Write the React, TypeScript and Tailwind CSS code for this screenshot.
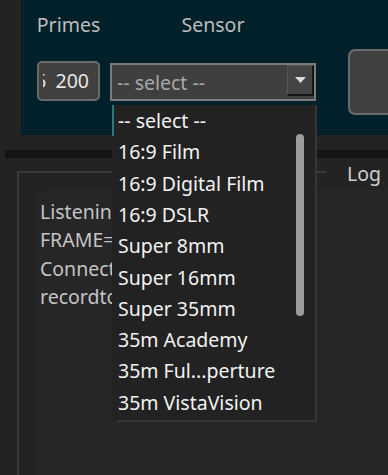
export default function App() {
  const items = [
    "-- select --",
    "16:9 Film",
    "16:9 Digital Film",
    "16:9 DSLR",
    "Super 8mm",
    "Super 16mm",
    "Super 35mm",
    "35m Academy",
    "35m Ful...perture",
    "35m VistaVision",
  ];
  const logLines = ["Listenin", "FRAME=", "Connect", "recordto"];
  return (
    <div
      className="relative w-[388px] h-[475px] overflow-hidden bg-[#232323] text-[19.5px]"
      style={{ fontFamily: '"Noto Sans", "Open Sans", sans-serif' }}
    >
      {/* top panel */}
      <div className="ml-[21px] h-[135px] bg-[#01202a] flex items-start pl-[16px] overflow-hidden">
        <div className="flex flex-col items-center w-[63px] flex-none pt-[12px]">
          <span className="leading-[26px] text-[#bdbdbd]">Primes</span>
          <div className="mt-[23px] h-[40px] w-[63px] rounded-[5px] border-2 border-[#6a6a6a] bg-[#404040] flex items-center pl-[4px] pr-[9px]">
            <div className="flex-1 h-full overflow-hidden flex items-center justify-end">
              <span className="whitespace-nowrap text-[#e6e6e6] leading-none [word-spacing:4px]">15 200</span>
            </div>
          </div>
        </div>
        <div className="flex flex-col items-center w-[206px] flex-none ml-[10px] pt-[12px]">
          <span className="leading-[26px] text-[#bdbdbd]">Sensor</span>
          <div className="mt-[25px] h-[38px] w-[206px] border-2 border-[#7a7a7a] bg-[#3f3f3f] flex items-start">
            <span className="flex-1 pl-[5px] leading-[36px] text-[#a8a8a8] whitespace-nowrap">-- select --</span>
            <div className="w-[27px] h-[31px] bg-[#444] border-t border-l border-[#555] border-b-2 border-r-2 border-b-[#151515] border-r-[#151515] flex items-center justify-center">
              <svg width="11" height="6" viewBox="0 0 11 6">
                <polygon points="0,0 11,0 5.5,6" fill="#dcdcdc" />
              </svg>
            </div>
          </div>
        </div>
        <div className="ml-[32px] mt-[49px] h-[66px] w-[80px] flex-none rounded-[7px] border-2 border-[#6a6a6a] bg-[#404040]" />
      </div>

      {/* dark bar */}
      <div className="ml-[5px] mt-[15px] h-[8px] bg-[#141414]" />

      {/* group box */}
      <div className="ml-[17px] mt-[13px] relative border-l-2 border-[#3a3a3a] h-[320px]">
        <div className="flex items-start h-[2px]">
          <div className="w-[307px] h-[2px] bg-[#3a3a3a] flex-none" />
          <span className="ml-[21px] -mt-[10px] leading-[26px] text-[#cfcfcf]">Log</span>
        </div>
        <div className="ml-[16px] mt-[17px] h-[300px] rounded-tl-[8px] bg-[#262626] pl-[5px] pt-[8px]">
          {logLines.map((l) => (
            <div key={l} className="leading-[28.3px] text-[#c4c4c4] whitespace-nowrap">
              {l}
            </div>
          ))}
        </div>
      </div>

      {/* dropdown popup */}
      <div className="absolute left-[112px] top-[105px] w-[205px] h-[317px] bg-[#222222] border-r-2 border-[#363636] flex flex-col">
        <div className="flex-1 relative">
          {items.map((it, i) => (
            <div
              key={it}
              className={
                i === 0
                  ? "h-[31.3px] flex items-center pl-[4px] border-l-2 border-[#2c7786] text-[#f2f2f2] whitespace-nowrap"
                  : "h-[31.3px] flex items-center pl-[6px] text-[#f2f2f2] whitespace-nowrap"
              }
            >
              {it}
            </div>
          ))}
          <div className="absolute left-[184px] top-[29px] w-[8px] h-[182px] rounded-full bg-[#9c9c9c]" />
        </div>
        <div className="ml-[5px] h-[2px] bg-[#363636]" />
      </div>
    </div>
  );
}
